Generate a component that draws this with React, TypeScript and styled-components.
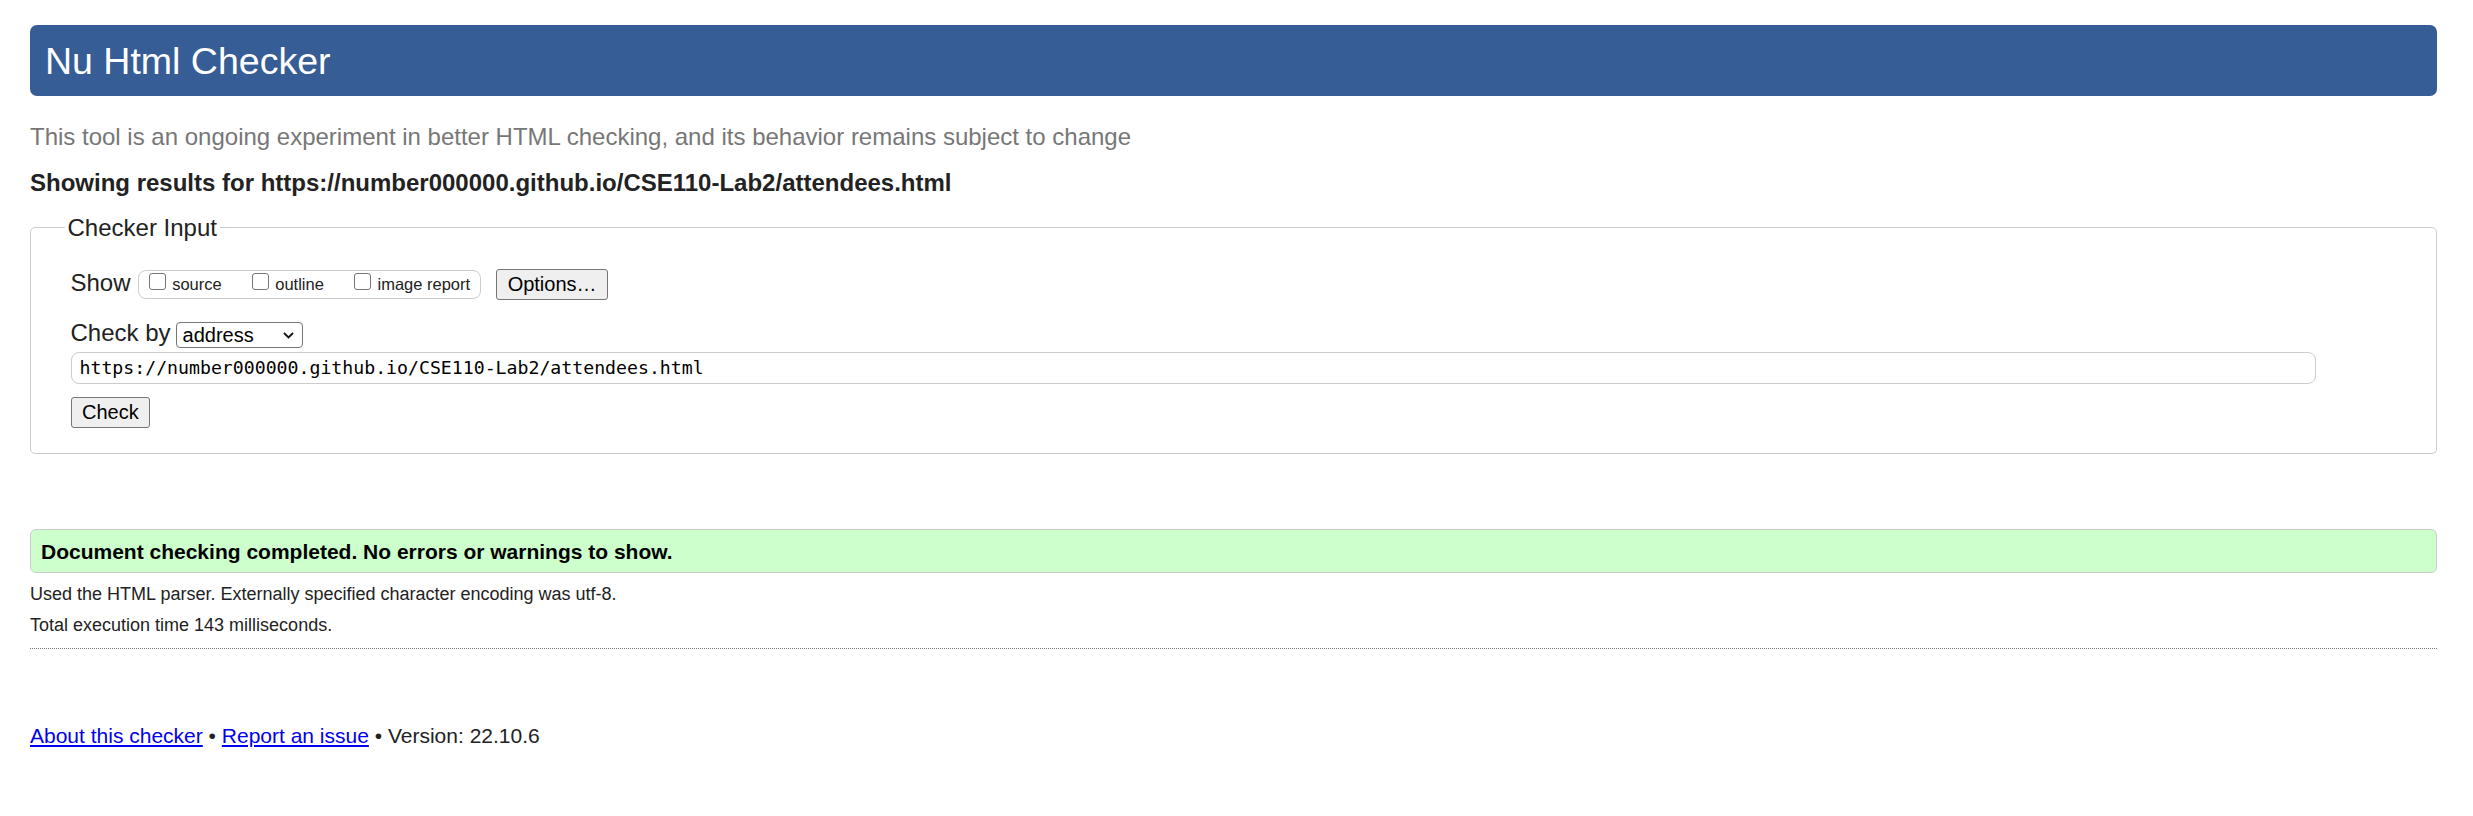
import React from "react";
import styled, { createGlobalStyle } from "styled-components";

const GlobalStyle = createGlobalStyle`
  html, body { margin: 0; padding: 0; background: #ffffff; }
  body { font-family: "Liberation Sans", Arial, sans-serif; color: #222222; }
`;

const Page = styled.div`
  padding: 25px 36px 40px 30px;
`;

const Banner = styled.h1`
  margin: 0;
  padding: 15px 15px 13px;
  background: #365d95;
  color: #ffffff;
  border-radius: 7px;
  font-size: 37.5px;
  line-height: 43px;
  font-weight: normal;
`;

const Intro = styled.p`
  margin: 26.7px 0 0;
  font-size: 24px;
  line-height: 28px;
  color: #777777;
`;

const ResultsFor = styled.p`
  margin: 18px 0 0;
  font-size: 24px;
  line-height: 28px;
  font-weight: bold;
  color: #222222;
`;

const InputPanel = styled.fieldset`
  margin: 17.3px 0 0;
  padding: 27px 40px 25px 39.5px;
  border: 1px solid #cccccc;
  border-radius: 5px;
`;

const PanelTitle = styled.legend`
  margin-left: -6px;
  padding: 0 3px;
  font-size: 24px;
  line-height: 28px;
  color: #222222;
`;

const Row = styled.div<{ $top?: number }>`
  display: flex;
  align-items: flex-start;
  margin-top: ${(p) => p.$top ?? 0}px;
`;

const RowLabel = styled.span<{ $gap: number }>`
  font-size: 24px;
  line-height: 28px;
  color: #222222;
  margin-right: ${(p) => p.$gap}px;
`;

const CheckGroup = styled.div`
  display: flex;
  align-items: flex-start;
  gap: 30px;
  box-sizing: border-box;
  height: 29px;
  margin: 1px 15px 0 0;
  padding: 1px 10px 0 10px;
  border: 1px solid #cccccc;
  border-radius: 8px;
`;

const CheckItem = styled.label`
  display: flex;
  align-items: flex-start;
  gap: 6.6px;
`;

const Box = styled.input`
  appearance: none;
  flex: none;
  margin: 1px 0 0;
  width: 17px;
  height: 17px;
  box-sizing: border-box;
  border: 1px solid #767676;
  border-radius: 3px;
  background: #ffffff;
`;

const BoxText = styled.span`
  margin-top: 3.5px;
  font-size: 16.5px;
  line-height: 19px;
  color: #222222;
`;

const Btn = styled.button`
  height: 31px;
  box-sizing: border-box;
  padding: 0 10.5px;
  border: 1px solid #767676;
  border-radius: 3px;
  background: #efefef;
  font-family: "Liberation Sans", Arial, sans-serif;
  font-size: 20px;
  line-height: 29px;
  color: #000000;
`;

const SelectWrap = styled.span`
  position: relative;
  display: inline-block;
  margin-top: 3px;
`;

const Select = styled.select`
  appearance: none;
  display: block;
  width: 127px;
  height: 26px;
  box-sizing: border-box;
  margin: 0;
  padding: 0 0 0 6px;
  border: 1px solid #767676;
  border-radius: 4px;
  background: #ffffff;
  font-family: "Liberation Sans", Arial, sans-serif;
  font-size: 20px;
  color: #000000;
`;

const Chevron = styled.svg`
  position: absolute;
  right: 9px;
  top: 10px;
  width: 11px;
  height: 7px;
  pointer-events: none;
`;

const UrlField = styled.input`
  display: block;
  margin-top: 4px;
  width: 2245px;
  height: 32px;
  box-sizing: border-box;
  padding: 0 8px;
  border: 1px solid #cccccc;
  border-radius: 8px;
  background: #ffffff;
  font-family: "DejaVu Sans Mono", monospace;
  font-size: 18.2px;
  color: #000000;
`;

const SubmitRow = styled.div`
  margin-top: 13px;
`;

const Success = styled.p`
  margin: 75px 0 0;
  padding: 9px 10px 8px;
  border: 1px solid #cccccc;
  border-radius: 6px;
  background: #ccffcc;
  font-size: 21px;
  line-height: 25px;
  font-weight: bold;
  color: #000000;
`;

const Detail = styled.p<{ $top: number }>`
  margin: ${(p) => p.$top}px 0 0;
  font-size: 18px;
  line-height: 21px;
  color: #222222;
`;

const Rule = styled.hr`
  margin: 12px 0 0;
  border: 0;
  border-top: 1px dotted #777777;
  height: 0;
`;

const Footer = styled.p`
  margin: 75px 0 0;
  font-size: 21px;
  line-height: 24px;
  color: #222222;
`;

const FootLink = styled.a`
  color: #0000ee;
  text-decoration: underline;
`;

export default function App() {
  return (
    <Page>
      <GlobalStyle />
      <Banner>Nu Html Checker</Banner>
      <Intro>
        This tool is an ongoing experiment in better HTML checking, and its behavior remains subject to change
      </Intro>
      <ResultsFor>Showing results for https://number000000.github.io/CSE110-Lab2/attendees.html</ResultsFor>
      <InputPanel>
        <PanelTitle>Checker Input</PanelTitle>
        <Row>
          <RowLabel $gap={7}>Show</RowLabel>
          <CheckGroup>
            <CheckItem>
              <Box type="checkbox" />
              <BoxText>source</BoxText>
            </CheckItem>
            <CheckItem>
              <Box type="checkbox" />
              <BoxText>outline</BoxText>
            </CheckItem>
            <CheckItem>
              <Box type="checkbox" />
              <BoxText>image report</BoxText>
            </CheckItem>
          </CheckGroup>
          <Btn type="button">Options…</Btn>
        </Row>
        <Row $top={19}>
          <RowLabel $gap={5}>Check by</RowLabel>
          <SelectWrap>
            <Select defaultValue="address">
              <option value="address">address</option>
              <option value="upload">file upload</option>
              <option value="textarea">text input</option>
            </Select>
            <Chevron viewBox="0 0 11 7">
              <polyline points="1,1 5.5,5.5 10,1" fill="none" stroke="#111111" strokeWidth="1.8" />
            </Chevron>
          </SelectWrap>
        </Row>
        <UrlField type="url" defaultValue="https://number000000.github.io/CSE110-Lab2/attendees.html" />
        <SubmitRow>
          <Btn type="button">Check</Btn>
        </SubmitRow>
      </InputPanel>
      <Success>Document checking completed. No errors or warnings to show.</Success>
      <Detail $top={11}>Used the HTML parser. Externally specified character encoding was utf-8.</Detail>
      <Detail $top={10}>Total execution time 143 milliseconds.</Detail>
      <Rule />
      <Footer>
        <FootLink href="#about">About this checker</FootLink> • <FootLink href="#issue">Report an issue</FootLink> •
        Version: 22.10.6
      </Footer>
    </Page>
  );
}
